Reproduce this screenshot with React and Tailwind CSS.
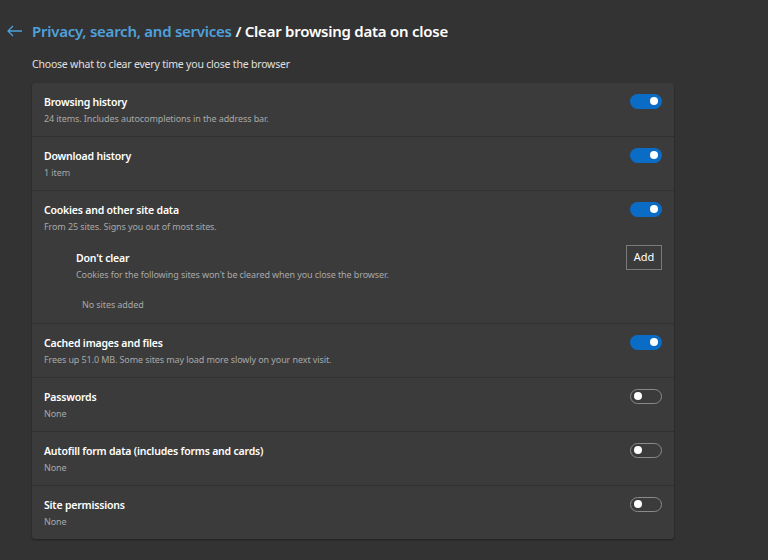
import React from "react";

const rows = [
    { title: "Browsing history", desc: "24 items. Includes autocompletions in the address bar.", on: true },
    { title: "Download history", desc: "1 item", on: true },
    { title: "Cookies and other site data", desc: "From 25 sites. Signs you out of most sites.", on: true, extra: true },
    { title: "Cached images and files", desc: "Frees up 51.0 MB. Some sites may load more slowly on your next visit.", on: true },
    { title: "Passwords", desc: "None", on: false },
    { title: "Autofill form data (includes forms and cards)", desc: "None", on: false },
    { title: "Site permissions", desc: "None", on: false },
];

function Toggle({ on }) {
    return on ? (
        <div className="w-[32px] h-[15px] rounded-full bg-[#0b6cc6] flex items-center justify-end pr-[4px]">
            <span className="w-[8px] h-[8px] rounded-full bg-white"></span>
        </div>
    ) : (
        <div className="w-[32px] h-[15px] rounded-full border border-[#8a8a8a] flex items-center pl-[3px]">
            <span className="w-[8px] h-[8px] rounded-full bg-white"></span>
        </div>
    );
}

export default function App() {
    return (
        <div className="w-[768px] h-[560px] bg-[#333333] overflow-hidden text-white" style={{ fontFamily: '"Noto Sans", "Open Sans", sans-serif' }}>
            <div className="flex items-center pt-[20px] pl-[7px] h-[42px]">
                <svg width="16" height="12" viewBox="0 0 16 12" className="mr-[9px]">
                    <path d="M6 1L1 6l5 5M1 6h14" fill="none" stroke="#4ea0dc" strokeWidth="1.3" />
                </svg>
                <h1 className="text-[15px] font-semibold tracking-[-0.25px]">
                    <span className="text-[#4fa1dd]">Privacy, search, and services</span>
                    <span className="text-white"> / Clear browsing data on close</span>
                </h1>
            </div>
            <p className="pl-[32px] mt-[15px] text-[10.5px] tracking-[-0.2px] text-[#e0e0e0]">Choose what to clear every time you close the browser</p>

            <div className="ml-[32px] mt-[10px] w-[642px] bg-[#3b3b3b] rounded-[3px] shadow-[0_1px_2px_rgba(0,0,0,0.4)] divide-y divide-[#313131]">
                {rows.map((r) => (
                    <div key={r.title}>
                        <div className="flex justify-between items-start h-[53px] pl-[12px] pr-[12px] pt-[11px]">
                            <div>
                                <p className="text-[10.5px] font-semibold tracking-[-0.2px] text-white leading-[16px]">{r.title}</p>
                                <p className="text-[9px] text-[#a8a8a8] tracking-[-0.1px] leading-[14px] mt-[2px]">{r.desc}</p>
                            </div>
                            <div>
                                <Toggle on={r.on} />
                            </div>
                        </div>
                        {r.extra && (
                            <div className="h-[79px] pl-[44px] pr-[12px]">
                                <div className="flex justify-between items-start">
                                    <div className="pt-[6px]">
                                        <p className="text-[10.5px] font-semibold tracking-[-0.2px] text-white leading-[16px]">Don't clear</p>
                                        <p className="text-[9px] text-[#a8a8a8] tracking-[-0.1px] leading-[14px] mt-[2px]">Cookies for the following sites won't be cleared when you close the browser.</p>
                                    </div>
                                    <button className="w-[36px] h-[25px] border border-[#7a7a7a] text-[11px] text-white mt-[1px]">Add</button>
                                </div>
                                <p className="text-[9px] text-[#a8a8a8] tracking-[-0.1px] pl-[6px] mt-[16px]">No sites added</p>
                            </div>
                        )}
                    </div>
                ))}
            </div>
        </div>
    );
}
